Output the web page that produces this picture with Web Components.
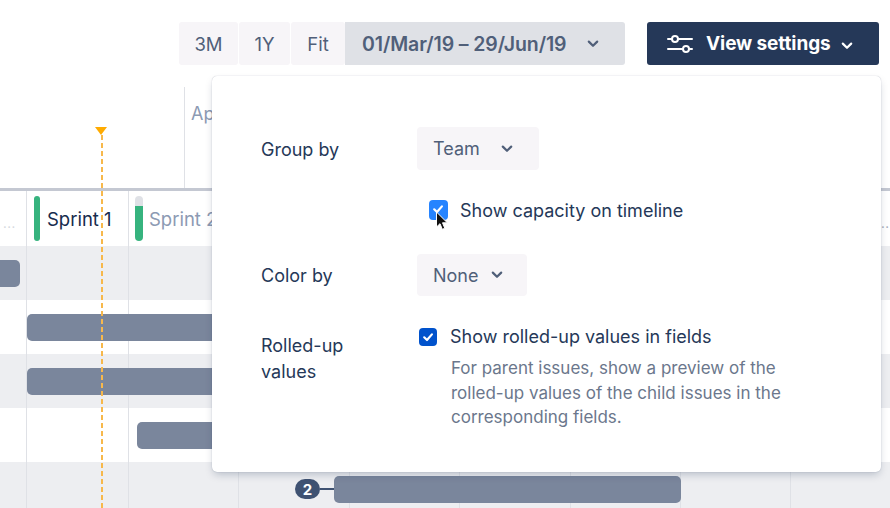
<!DOCTYPE html>
<html><head><meta charset="utf-8">
<style>
html,body{margin:0;padding:0;background:#fff}
body{width:890px;height:508px;overflow:hidden;font-family:Inter,"Noto Sans",sans-serif;color:#172B4D}
</style></head>
<body>
<gantt-app></gantt-app>
<template id="t-app"><style>
:host{display:flex;flex-direction:column;position:relative;width:890px;height:508px;overflow:hidden}
:host>*{flex:none}
.toolbar{display:flex;justify-content:flex-end;align-items:flex-start;padding:22px 11px 0 0;height:43px;gap:22px}
.seg{display:flex;gap:1px}
.head{height:123px;box-sizing:border-box;padding:22px 0 0 184px}
.month{height:101px;border-left:1px solid #dfe1e6;padding:15px 0 0 6px;color:#8c9ab3;font-size:18px;line-height:24px;box-sizing:border-box}
.rule{height:3px;background:#c4c8d2}
.today{position:absolute;left:101px;top:135px;bottom:0;width:2px;background:repeating-linear-gradient(#f7b84b 0 5px,transparent 5px 8px)}
.tri{position:absolute;left:95px;top:127px;width:0;height:0;border-left:6.5px solid transparent;border-right:6.5px solid transparent;border-top:8px solid #FFAB00}
</style>
<div class="toolbar">
  <div class="seg">
    <seg-btn style="width:59px">3M</seg-btn><seg-btn style="width:51px">1Y</seg-btn><seg-btn style="width:54px">Fit</seg-btn>
    <date-btn>01/Mar/19 – 29/Jun/19</date-btn>
  </div>
  <view-btn>View settings</view-btn>
</div>
<div class="head"><div class="month">Ap</div></div>
<div class="rule"></div>
<sprint-row></sprint-row>
<gantt-row shade><gantt-bar start="-20" end="20"></gantt-bar></gantt-row>
<gantt-row><gantt-bar start="27" end="300"></gantt-bar></gantt-row>
<gantt-row shade><gantt-bar start="27" end="300"></gantt-bar></gantt-row>
<gantt-row><gantt-bar start="137" end="300"></gantt-bar></gantt-row>
<gantt-row shade><bar-badge>2</bar-badge><gantt-bar start="334" end="681" flush></gantt-bar></gantt-row>
<div class="today"></div><div class="tri"></div>
<settings-popover></settings-popover>
</template>

<script>
const tpl=(css,html)=>{const t=document.createElement('template');t.innerHTML=`<style>${css}</style>${html}`;return t};
const chev=(c,w=2.2)=>`<svg width="12" height="8" viewBox="0 0 12 8" fill="none"><path d="M1.8 1.6 6 5.8l4.2-4.2" stroke="${c}" stroke-width="${w}" stroke-linecap="round" stroke-linejoin="round"/></svg>`;
function def(name,t,extra){
  customElements.define(name,class extends HTMLElement{
    constructor(){super();this.attachShadow({mode:'open'}).appendChild(t.content.cloneNode(true));}
    connectedCallback(){extra&&extra.call(this)}
  });
}
def('gantt-app',document.getElementById('t-app'));

def('seg-btn',tpl(`:host{display:flex;align-items:center;justify-content:center;height:43px;background:#f7f5f8;border-radius:3px;color:#505F79;font-size:18.5px}`,`<slot></slot>`));
def('date-btn',tpl(`:host{display:flex;align-items:center;box-sizing:border-box;width:280px;height:43px;margin-left:-1px;padding-left:17px;background:#dfe1e6;border-radius:0 3px 3px 0;color:#505F79;font-size:19.5px;font-weight:600;letter-spacing:-.1px;white-space:nowrap}
svg{margin-left:21px}`,`<slot></slot>${chev('#505F79')}`));
def('view-btn',tpl(`:host{display:flex;align-items:center;box-sizing:border-box;width:232px;height:43px;padding-left:20px;background:#253858;border-radius:3px;color:#fff;font-size:19px;font-weight:700;letter-spacing:-.1px;white-space:nowrap}
.i{margin-right:13px;display:block}.c{margin-left:10px}`,
`<svg class="i" width="26" height="20" viewBox="0 0 26 20" fill="none" stroke="#fff" stroke-width="2"><path d="M1 5h3.500M11.500 5H25M1 15h14.500M22.500 15H25" stroke-linecap="round"/><circle cx="8" cy="5" r="3"/><circle cx="19" cy="15" r="3"/></svg><slot></slot><span class="c">${chev('#fff')}</span>`));

const lines=[26,128,238,349,459,570,680,790];
const grid=lines.map(x=>`linear-gradient(#dfe1e6,#dfe1e6) ${x}px 0/1px 100% no-repeat`).join(',');
def('gantt-row',tpl(`:host{display:flex;align-items:center;height:54px;flex:none;background:${grid},#fff}
:host([shade]){background:${grid},#edeef1}`,`<slot></slot>`));
def('gantt-bar',tpl(`:host{display:block;height:27px;background:#7a869c;border-radius:5px;flex:none}`,``),function(){
  const s=+this.getAttribute('start'),e=+this.getAttribute('end');
  this.style.width=(e-s)+'px';
  if(!this.hasAttribute('flush'))this.style.marginLeft=s+'px';
});
def('bar-badge',tpl(`:host{display:flex;align-items:center;margin-left:295px;flex:none}
.b{display:flex;align-items:center;justify-content:center;width:25px;height:20px;border-radius:10px;background:#3f5272;color:#fff;font-size:15px;font-weight:700}
.l{width:14px;height:2px;background:#3f5272}`,`<div class="b"><slot></slot></div><div class="l"></div>`));

def('sprint-row',tpl(`:host{display:block;height:55px;flex:none;position:relative;background:${grid},#fff;font-size:18.5px}
.wrap{display:flex;height:100%;align-items:center;box-sizing:border-box}
.more{width:34px;flex:none;color:#d5d9e0;padding:8px 0 0 3px;box-sizing:border-box;font-size:13px;letter-spacing:.5px}
.mark{width:6px;height:45px;border-radius:3px;background:#36B37E;flex:none;margin-top:-1px}
.mark.two{width:8px;border-radius:4px;background:linear-gradient(#dfe1e6 0 10px,#36B37E 10px)}
.s1{width:88px;padding-left:7px;box-sizing:border-box;color:#172B4D;flex:none;white-space:nowrap}
.s1+.mark{margin-left:7px}
.s2{padding-left:6px;color:#8c9ab3;white-space:nowrap}
.end{position:absolute;left:881px;top:24px;color:#a5adba;font-size:13px;letter-spacing:.5px}`,
`<div class="wrap"><span class="more">...</span><span class="mark"></span><span class="s1">Sprint 1</span><span class="mark two"></span><span class="s2">Sprint 2</span></div><span class="end">..</span>`));

def('select-box',tpl(`:host{display:inline-flex;align-items:center;box-sizing:border-box;height:43px;padding-left:16px;background:#f7f5f8;border-radius:4px;color:#505F79;font-size:18px}
svg{display:block}.c{margin-left:var(--gap,21px)}`,`<slot></slot><span class="c">${chev('#505F79')}</span>`));
def('check-box',tpl(`:host{display:block;flex:none;width:18px;height:18px;border-radius:4px;background:var(--bg,#0052CC);position:relative}
svg{position:absolute;left:2px;top:2px}`,`<svg width="14" height="14" viewBox="0 0 14 14" fill="none"><path d="M3.200 7.300 6 10l4.900-5.600" stroke="#fff" stroke-width="2.200" stroke-linecap="round" stroke-linejoin="round"/></svg>`));
def('mouse-cursor',tpl(`:host{position:absolute;left:435px;top:211px;width:14px;height:22px;display:block}`,
`<svg width="14" height="22" viewBox="0 0 14 22"><path d="M1.500 1v15l3.500-3.300 2.300 5.600 2.500-1-2.300-5.500h4.800z" fill="#111" stroke="#fff" stroke-width="1"/></svg>`));

def('settings-popover',tpl(`:host{position:absolute;left:212px;top:76px;width:669px;height:396px;box-sizing:border-box;background:#fff;border-radius:5px;box-shadow:0 4px 8px -2px rgba(9,30,66,.25),0 0 1px rgba(9,30,66,.31);padding:51px 0 0 49px;font-size:18px;color:#253858}
.row{display:grid;grid-template-columns:156px 1fr}
.lab{align-self:center}
.g1 .lab{padding-top:1px}
.g1{height:43px}
.cap{display:flex;align-items:center;margin:30px 0 0 168px;height:20px;gap:12px;--bg:#2684FF}
.cap check-box{width:19px;height:20px;}
.g2{height:42px;margin-top:34px}
select-box.n{--gap:13px;height:42px}
.g3{margin-top:31px}
.lab2{line-height:26px;padding-top:6px}
.chk{display:flex;align-items:center;gap:13px;margin-left:2px;height:20px;line-height:20px}
.desc{margin:9px 0 0 34px;width:345px;font-size:17px;line-height:24.500px;color:#6B778C}
`,`<div class="row g1"><span class="lab">Group by</span><div><select-box style="width:122px">Team</select-box></div></div>
<div class="cap"><check-box></check-box><span>Show capacity on timeline</span></div>
<div class="row g2"><span class="lab">Color by</span><div><select-box class="n" style="width:110px">None</select-box></div></div>
<div class="row g3"><span class="lab2">Rolled-up<br>values</span><div><div class="chk"><check-box></check-box><span>Show rolled-up values in fields</span></div><div class="desc">For parent issues, show a preview of the rolled-up values of the child issues in the corresponding fields.</div></div></div>`));
// cursor lies over the popover
document.querySelector('gantt-app').shadowRoot.appendChild(document.createElement('mouse-cursor'));
</script>
</body></html>
